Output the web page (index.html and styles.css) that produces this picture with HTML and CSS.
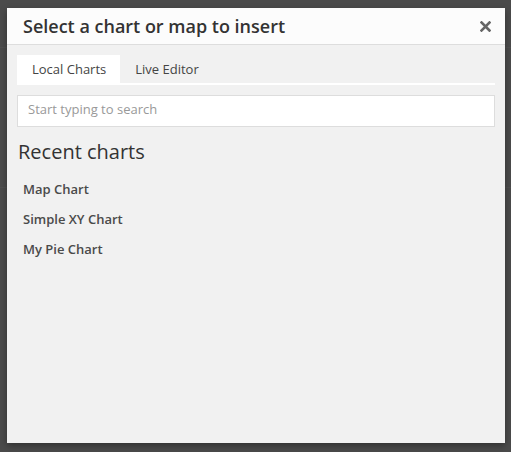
FILE: index.html
```html
<!DOCTYPE html>
<html>
<head>
<meta charset="utf-8">
<link rel="stylesheet" href="styles.css">
</head>
<body>
<div class="modal">
  <div class="modal-header">
    <h1 class="modal-title">Select a chart or map to insert</h1>
    <button class="close" aria-label="Close">
      <svg width="11" height="11" viewBox="0 0 11 11"><path d="M1.5 1.5 L9.5 9.5 M9.5 1.5 L1.5 9.5" stroke="#666" stroke-width="2.6" stroke-linecap="square"/></svg>
    </button>
  </div>
  <div class="modal-body">
    <div class="tabs">
      <div class="tab active">Local Charts</div>
      <div class="tab">Live Editor</div>
    </div>
    <input class="search" type="text" placeholder="Start typing to search">
    <h2 class="section-title">Recent charts</h2>
    <ul class="chart-list">
      <li>Map Chart</li>
      <li>Simple XY Chart</li>
      <li>My Pie Chart</li>
    </ul>
  </div>
</div>
</body>
</html>
```
FILE: styles.css
```css
html, body {
  margin: 0;
  height: 100%;
}
body {
  background-color: #4b4b4b;
  background-image:
    linear-gradient(to bottom, transparent 47px, #505050 47px, #505050 48px, transparent 48px),
    linear-gradient(to bottom, transparent 187px, #505050 187px, #505050 188px, transparent 188px);
  padding: 8px 6px 9px 7px;
  box-sizing: border-box;
  font-family: "Open Sans", "Liberation Sans", sans-serif;
}
.modal {
  width: 498px;
  height: 435px;
  background: #f1f1f1;
  box-shadow: 0 3px 7px rgba(0,0,0,0.35);
  display: flex;
  flex-direction: column;
}
.modal-header {
  height: 36px;
  background: #fcfcfc;
  border-bottom: 1px solid #dddddd;
  display: flex;
  align-items: center;
  justify-content: space-between;
  padding: 0 14px 0 16px;
  box-sizing: content-box;
}
.modal-title {
  margin: 0;
  font-size: 18px;
  font-weight: 600;
  color: #333;
  line-height: 36px;
}
.close {
  border: 0;
  background: none;
  padding: 0;
  width: 11px;
  height: 11px;
  display: flex;
}
.modal-body {
  padding: 10px 10px 0 10px;
  flex: 1;
}
.tabs {
  display: flex;
  border-bottom: 2px solid #fff;
}
.tab {
  height: 28px;
  line-height: 28px;
  padding: 0 15px;
  font-size: 13px;
  color: #444;
}
.tab.active {
  background: #fff;
  padding-right: 14px;
}
.search {
  display: block;
  width: 100%;
  box-sizing: border-box;
  margin-top: 10px;
  height: 32px;
  border: 1px solid #dddddd;
  background: #fff;
  padding: 0 10px 4px 10px;
  font-family: inherit;
  font-size: 13px;
  color: #333;
  outline: none;
}
.search::placeholder {
  color: #999;
}
.section-title {
  margin: 11px 0 0 1px;
  font-size: 20px;
  font-weight: 400;
  color: #333;
  line-height: 28px;
}
.chart-list {
  list-style: none;
  margin: 8px 0 0 0;
  padding: 0 0 0 6px;
}
.chart-list li {
  font-size: 13px;
  font-weight: 600;
  color: #4a4a4a;
  line-height: 30px;
}
```
